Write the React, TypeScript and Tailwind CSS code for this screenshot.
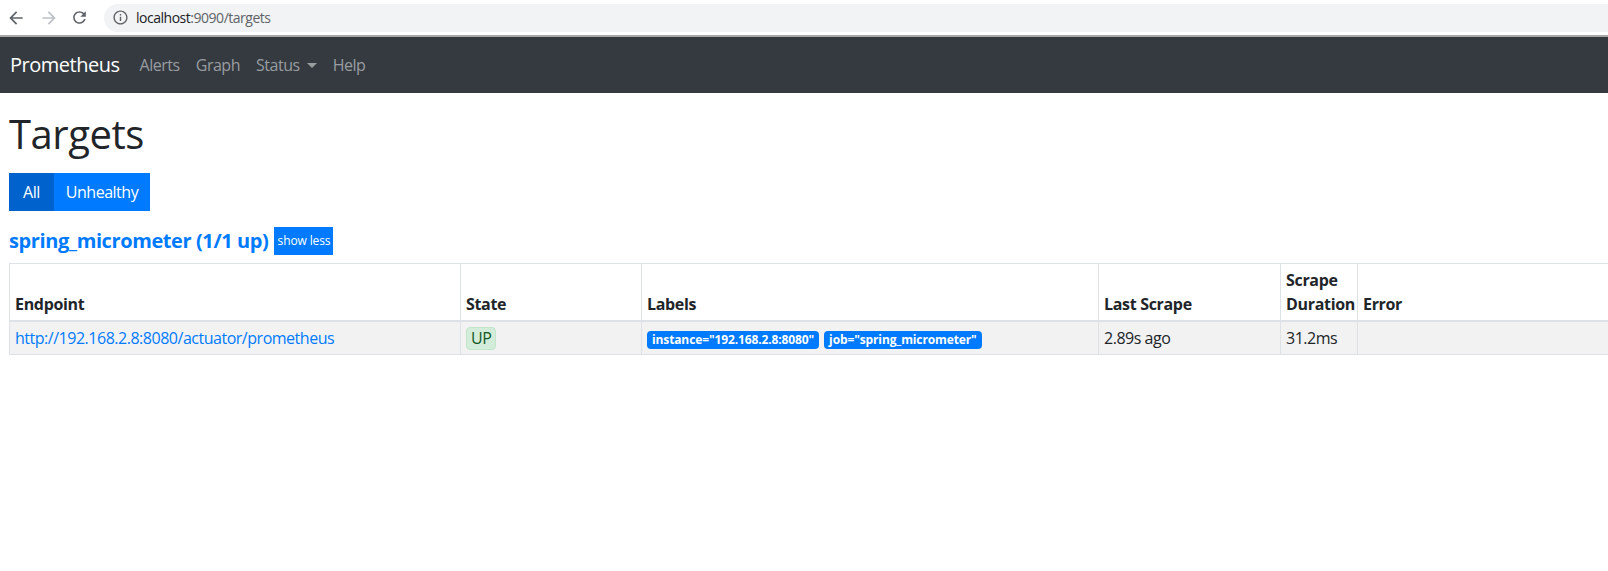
import React from "react";

const font = { fontFamily: '"Open Sans", "Noto Sans", Arial, sans-serif' };

function BrowserBar() {
  return (
    <div className="flex h-[35px] items-center bg-white border-b-2 border-[#a8a8a8] box-content">
      <div className="flex w-[31px] justify-center">
        <svg width="20" height="20" viewBox="0 0 24 24" fill="#5f6368">
          <path d="M20 11H7.83l5.59-5.59L12 4l-8 8 8 8 1.41-1.41L7.83 13H20v-2z" />
        </svg>
      </div>
      <div className="ml-[2px] flex w-[31px] justify-center">
        <svg width="20" height="20" viewBox="0 0 24 24" fill="#bdc1c6">
          <path d="M12 4l-1.41 1.41L16.17 11H4v2h12.17l-5.58 5.59L12 20l8-8z" />
        </svg>
      </div>
      <div className="flex w-[31px] justify-center">
        <svg width="19" height="19" viewBox="0 0 24 24" fill="#5f6368">
          <path d="M17.65 6.35C16.2 4.9 14.21 4 12 4c-4.42 0-7.990 3.58-7.990 8s3.57 8 7.990 8c3.73 0 6.84-2.55 7.73-6h-2.08c-.82 2.33-3.04 4-5.65 4-3.31 0-6-2.69-6-6s2.69-6 6-6c1.66 0 3.14.69 4.22 1.78L13 11h7V4l-2.35 2.35z" />
        </svg>
      </div>
      <div className="ml-[9px] flex h-[28px] flex-1 items-center rounded-l-full bg-[#f1f3f4] -mr-4">
        <svg className="ml-[8px]" width="17" height="17" viewBox="0 0 24 24" fill="#5f6368">
          <path d="M11 7h2v2h-2zm0 4h2v6h-2zm1-9C6.48 2 2 6.48 2 12s4.48 10 10 10 10-4.48 10-10S17.52 2 12 2zm0 18c-4.41 0-8-3.59-8-8s3.590-8 8-8 8 3.590 8 8-3.590 8-8 8z" />
        </svg>
        <span className="ml-[7px] text-[14px] text-[#202124]">
          localhost<span className="text-[#5f6368]">:9090/targets</span>
        </span>
      </div>
    </div>
  );
}

function Navbar() {
  return (
    <div className="flex h-[56px] items-center bg-[#343a40] pl-[10px]">
      <span className="text-[20px] text-white mr-[12px]">Prometheus</span>
      <span className="px-[8px] text-[16px] text-[#9a9da0]">Alerts</span>
      <span className="px-[8px] text-[16px] text-[#9a9da0]">Graph</span>
      <span className="flex items-center px-[8px] text-[16px] text-[#9a9da0]">
        Status
        <span className="ml-[7px] inline-block h-0 w-0 border-x-[5px] border-t-[5px] border-x-transparent border-t-[#9a9da0]" />
      </span>
      <span className="px-[8px] text-[16px] text-[#9a9da0]">Help</span>
    </div>
  );
}

const th = "border border-[#dee2e6] border-b-2 px-[5px] py-[4px] text-left align-bottom text-[16px] font-bold leading-[24px] tracking-[-0.02em] text-[#212529]";
const td = "border border-[#dee2e6] px-[5px] py-[4px] align-top text-[16px] leading-[24px] text-[#212529]";

export default function App() {
  return (
    <div className="w-[1608px] h-[571px] overflow-hidden bg-white tracking-[-0.03em]" style={font}>
      <BrowserBar />
      <Navbar />
      <div className="pl-[9px]">
        <h1 className="mt-[17px] text-[40px] leading-[48px] font-medium text-[#212529]">Targets</h1>
        <div className="mt-[15px] flex">
          <div className="flex h-[38px] w-[45px] items-center justify-center bg-[#0062cc] text-[16px] text-white">All</div>
          <div className="flex h-[38px] w-[96px] items-center justify-center bg-[#007bff] text-[16px] text-white">Unhealthy</div>
        </div>
        <div className="mt-[16px] flex h-[28px] items-center">
          <span className="text-[20px] font-bold tracking-[-0.02em] text-[#007bff]">spring_micrometer (1/1 up)</span>
          <span className="ml-[6px] flex h-[28px] w-[59px] items-center justify-center bg-[#007bff] text-[12px] tracking-[-0.01em] text-white">show less</span>
        </div>
        <table className="mt-[8px] w-[1660px] table-fixed border-collapse">
          <colgroup>
            <col className="w-[451px]" />
            <col className="w-[181px]" />
            <col className="w-[457px]" />
            <col className="w-[182px]" />
            <col className="w-[77px]" />
            <col />
          </colgroup>
          <thead>
            <tr>
              <th className={th}>Endpoint</th>
              <th className={th}>State</th>
              <th className={th}>Labels</th>
              <th className={th}>Last Scrape</th>
              <th className={th}>Scrape Duration</th>
              <th className={th}>Error</th>
            </tr>
          </thead>
          <tbody>
            <tr className="bg-[#f2f2f2]">
              <td className={td}>
                <span className="text-[#007bff]">http://192.168.2.8:8080/actuator/prometheus</span>
              </td>
              <td className={td}>
                <span className="inline-block rounded-[4px] border border-[#c3e6cb] bg-[#d4edda] px-[4px] leading-[21px] text-[#155724]">UP</span>
              </td>
              <td className={td}>
                <span className="mr-[5px] inline-block rounded-[4px] bg-[#007bff] px-[5px] py-[1px] text-[12px] font-bold leading-[16px] tracking-[-0.01em] text-white">instance="192.168.2.8:8080"</span>
                <span className="inline-block rounded-[4px] bg-[#007bff] px-[5px] py-[1px] text-[12px] font-bold leading-[16px] tracking-[-0.01em] text-white">job="spring_micrometer"</span>
              </td>
              <td className={td}>2.89s ago</td>
              <td className={td}>31.2ms</td>
              <td className={td}></td>
            </tr>
          </tbody>
        </table>
      </div>
    </div>
  );
}
